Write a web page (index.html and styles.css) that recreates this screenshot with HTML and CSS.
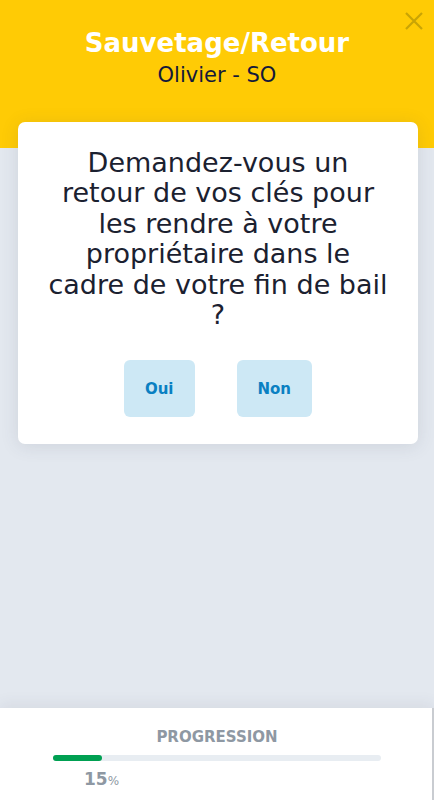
FILE: index.html
```html
<!DOCTYPE html>
<html lang="fr">
<head>
    <meta charset="UTF-8">
    <meta name="viewport" content="width=device-width, initial-scale=1.0">
    <title>Sauvetage/Retour</title>
    <link rel="stylesheet" href="styles.css">
</head>
<body>
    <div class="screen">
        <div class="header">
            <a class="close" href="javascript:;">
                <svg width="18" height="18" viewBox="0 0 18 18">
                    <path d="M1 1 L17 17 M17 1 L1 17" stroke="currentColor" stroke-width="2.2" fill="none"/>
                </svg>
            </a>
            <h1 class="title">Sauvetage/Retour</h1>
            <p class="subtitle">Olivier - SO</p>
        </div>

        <div class="main">
            <div class="card">
                <p class="question">Demandez-vous un retour de vos clés pour les rendre à votre propriétaire dans le cadre de votre fin de bail ?</p>
                <div class="answers">
                    <a class="answer" href="javascript:;">Oui</a>
                    <a class="answer" href="javascript:;">Non</a>
                </div>
            </div>
        </div>

        <div class="footer">
            <div class="progress-label">PROGRESSION</div>
            <div class="progress-track">
                <div class="progress-fill" style="width: 15%"></div>
            </div>
            <div class="progress-value">15<span>%</span></div>
        </div>
    </div>
</body>
</html>
```

FILE: styles.css
```css
* {
    margin: 0;
    padding: 0;
    box-sizing: border-box;
}
body {
    font-family: "DejaVu Sans", "Noto Sans", sans-serif;
    background-color: #e3e8ef;
}
.screen {
    height: 800px;
    display: flex;
    flex-direction: column;
}
.header {
    position: relative;
    height: 148px;
    padding-top: 27px;
    background-color: #ffcb05;
    text-align: center;
}
.close {
    position: absolute;
    top: 12px;
    right: 11px;
    color: #c9a405;
}
.title {
    font-size: 26px;
    font-weight: 700;
    line-height: 32px;
    color: #ffffff;
}
.subtitle {
    margin-top: 3px;
    font-size: 21px;
    line-height: 26px;
    color: #14193a;
}

.main {
    flex: 1;
    padding: 0 16px 0 18px;
}
.card {
    margin-top: -26px;
    padding: 26px 27px 27px;
    background-color: #ffffff;
    border-radius: 7px;
    box-shadow: 0 2px 18px rgba(60, 70, 90, 0.13);
    position: relative;
}
.question {
    font-size: 27px;
    line-height: 30.4px;
    color: #1b2130;
    text-align: center;
}
.answers {
    display: flex;
    justify-content: center;
    gap: 42px;
    margin-top: 30px;
}
.answer {
    display: flex;
    align-items: center;
    justify-content: center;
    height: 57px;
    padding: 0 21px;
    border-radius: 6px;
    background-color: #cde8f5;
    color: #0a80c2;
    font-size: 15px;
    font-weight: 700;
    text-decoration: none;
}

.footer {
    height: 92px;
    padding: 20px 51px 0 53px;
    background-color: #ffffff;
    box-shadow: 0 -4px 14px rgba(60, 70, 90, 0.08);
    border-right: 2px solid #c9ccd1;
}
.progress-label {
    text-align: center;
    font-size: 15px;
    font-weight: 700;
    line-height: 18px;
    color: #8e98a3;
}
.progress-track {
    margin-top: 9px;
    height: 6px;
    border-radius: 3px;
    background-color: #e8edf2;
}
.progress-fill {
    height: 6px;
    border-radius: 3px;
    background-color: #00a052;
}
.progress-value {
    margin-top: 8px;
    padding-left: 31px;
    font-size: 17px;
    font-weight: 700;
    color: #8e98a3;
}
.progress-value span {
    font-size: 12px;
    font-weight: 400;
}
```
